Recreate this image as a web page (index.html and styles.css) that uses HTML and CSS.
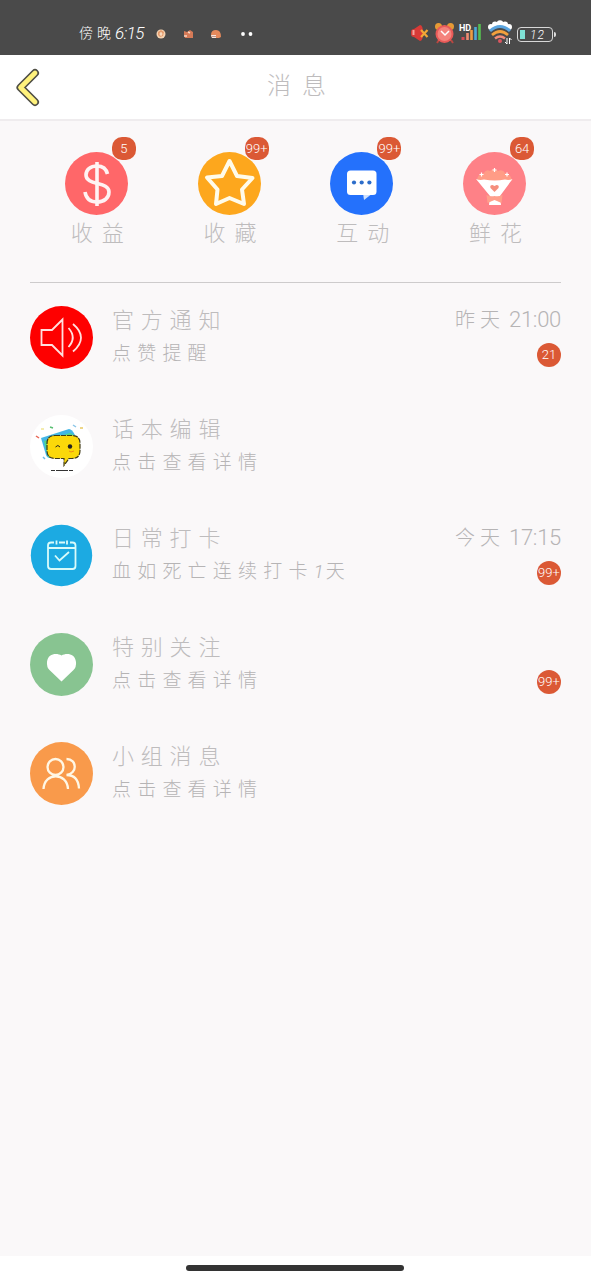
FILE: index.html
```html
<!DOCTYPE html>
<html lang="zh-CN">
<head>
<meta charset="utf-8">
<title>消息</title>
<link rel="stylesheet" href="styles.css">
</head>
<body>
<div class="status">
  <div class="status-left">
    <span class="clock"><span class="period">傍晚</span><span class="clock-digits">6:15</span></span>
    <svg class="minis" width="100" height="14" viewBox="0 0 100 14">
      <circle cx="8" cy="7" r="4.500" fill="#f4d3b2"/><path d="M5 5l3-2 3 2-1 4-3 1-2-2z" fill="#e49a6b"/><path d="M6.500 7h3M8 5v4" stroke="#fff0dc"/>
      <path d="M31 4l3 1 3-2 3 2v6h-8l-1-3z" fill="#d57a57"/><path d="M31 9h3M35 5l2 1" stroke="#f8d7c3" stroke-width="1.500"/>
      <path d="M58 8q0-5 5-5 5 0 5 7l-2 1h-7z" fill="#e58a5c"/><path d="M58 8h5v3h-4z" fill="#f9e5dc"/><path d="M60 9v1M62 9v1" stroke="#884a3a"/>
      <circle cx="90" cy="7" r="1.900" fill="#fff"/><circle cx="97.500" cy="7" r="1.900" fill="#fff"/>
    </svg>
  </div>
  <div class="status-right">
    <svg width="105" height="26" viewBox="0 0 105 26">
      <path d="M0 12q0-3 3-3l6-4q3 0 3 8t-3 8l-6-4q-3 0-3-3z" fill="#d83a37"/><path d="M2.500 10v5" stroke="#f7a19b" stroke-width="2"/><path d="M10 10l6.500 7M16.500 10L10 17" stroke="#f4a735" stroke-width="2.200"/>
      <circle cx="27.500" cy="6.500" r="3.500" fill="#e69a35"/><circle cx="39.500" cy="6.500" r="3.500" fill="#e69a35"/><path d="M28 20l-2 3M40 20l2 3" stroke="#b84740" stroke-width="2"/><circle cx="33.500" cy="14" r="9" fill="#e95a58"/><circle cx="33.500" cy="14" r="7" fill="#f4837c"/><path d="M30 11l4 4 4-4" fill="none" stroke="#fff" stroke-width="1.500"/>
      <path d="M52 17v3" stroke="#d84b54" stroke-width="3"/><path d="M56.500 13v7" stroke="#ef8c71" stroke-width="2.600"/><path d="M60.500 10v10" stroke="#ef9b42" stroke-width="2.600"/><path d="M64.500 7v13" stroke="#4ea8d8" stroke-width="2.600"/><path d="M68.500 4v16" stroke="#55bd51" stroke-width="2.600"/>
      <text class="hd" x="48" y="11">HD</text>
      <g fill="#fff"><circle cx="80" cy="7" r="3"/><circle cx="84" cy="4.500" r="3"/><circle cx="89" cy="3.500" r="3.200"/><circle cx="94" cy="4.500" r="3"/><circle cx="98" cy="7" r="3"/></g><path d="M79 11q10-9 20 0" fill="none" stroke="#5ba5df" stroke-width="3"/><path d="M81 15q8-7 16 0" fill="none" stroke="#f2a13d" stroke-width="2.700"/><path d="M84 18.500q5-4 10 0" fill="none" stroke="#f18b78" stroke-width="2.500"/><circle cx="89" cy="21" r="2" fill="#db5660"/><path d="M96 18v6l-2-2M98.500 24v-6l2 2" fill="none" stroke="#fff"/>
    </svg>
    <div class="battery"><span class="charge"></span><span class="level">12</span></div><i class="cap"></i>
  </div>
</div>
<header class="header">
  <svg class="back" width="28" height="42" viewBox="0 0 28 42"><path d="M21 6L6.500 20.500 21 35" fill="none" stroke="#504f45" stroke-width="8" stroke-linecap="round" stroke-linejoin="round"/><path d="M21 6L6.500 20.500 21 35" fill="none" stroke="#fff27c" stroke-width="4.700" stroke-linecap="round" stroke-linejoin="round"/></svg>
  <h1 class="heading">消息</h1>
</header>
<main class="content">
  <nav class="shortcuts">
    <div class="shortcut"><div class="icon-wrap">
      <svg class="icon" viewBox="0 0 63 63"><circle cx="31.500" cy="31.500" r="31.500" fill="#ff6769"/><g fill="none" stroke="#fff3f3" stroke-width="3.600"><path d="M32 10v44"/><path d="M42.500 22C41 15.500 36 14 32 14c-7 0-11 4-11 9 0 11 23 6 23 17 0 6-5 10-12 10-7 0-11-4-12-10"/></g></svg>
      <span class="badge corner">5</span></div><span class="label">收益</span></div>
    <div class="shortcut"><div class="icon-wrap">
      <svg class="icon" viewBox="0 0 63 63"><circle cx="31.500" cy="31.500" r="31.500" fill="#fda71d"/><path d="M31.500 9L39 24l15.500 2L44 37.500 46 52l-14.500-6L18 52l1.500-14.500L9 25.500l15-1.500z" fill="none" stroke="#fffbea" stroke-width="4" stroke-linejoin="round"/></svg>
      <span class="badge corner">99+</span></div><span class="label">收藏</span></div>
    <div class="shortcut"><div class="icon-wrap">
      <svg class="icon" viewBox="0 0 63 63"><circle cx="31.500" cy="31.500" r="31.500" fill="#2471fc"/><path d="M33 41l1 7 9-7" fill="#cfe0fb"/><rect x="17" y="18.500" width="29.500" height="24.500" rx="3.500" fill="#fff"/><g fill="#2c6dca"><circle cx="24" cy="30.500" r="2.100"/><circle cx="31.700" cy="30.500" r="2.100"/><circle cx="39.400" cy="30.500" r="2.100"/></g></svg>
      <span class="badge corner">99+</span></div><span class="label">互动</span></div>
    <div class="shortcut"><div class="icon-wrap">
      <svg class="icon" viewBox="0 0 63 63"><circle cx="31.500" cy="31.500" r="31.500" fill="#fe8187"/><path d="M14 29q0-7 7-8 2-4 6-2 4-4 8 0 5-2 7 2 6 1 7 8z" fill="#ff9c86"/><path d="M13 27q4 1.500 8 .5 11 2 21 0 4 1 7.500-.5L37 44l1 9H26l1-9z" fill="#fff"/><path d="M23.500 43q4 2 8 1 4 1 8-1l-1 8-7-3-7 3z" fill="#ff9f8b"/><path d="M27 53q0-4 4.500-4t4.500 4z" fill="#fff"/><path d="M31.500 40l-4-4q-1-3 2-3l2 1 2-1q3 0 2 3z" fill="#f58e7c"/><g stroke="#fff" stroke-width="1.200"><path d="M29.500 18h4M31.500 16v4M16.500 22.500h4M18.500 20.500v4M42 22.500h4M44 20.500v4"/></g></svg>
      <span class="badge corner">64</span></div><span class="label">鲜花</span></div>
  </nav>
  <section class="messages">
    <article class="row">
      <svg class="icon" viewBox="0 0 63 63"><circle cx="31.500" cy="31.500" r="31.500" fill="#fe0000"/><g fill="none" stroke="#ffe0df" stroke-width="1.800"><path d="M11.500 24H22L32.500 13.500v36L22 39H11.500z"/><path d="M38.500 22q8.500 9.500 0 19M43 18q16 13.500 0 27.500"/></g></svg>
      <div class="body"><h2 class="title">官方通知</h2><p class="sub">点赞提醒</p></div>
      <div class="meta"><time class="time"><span class="day">昨天</span>21:00</time><span class="badge round">21</span></div>
    </article>
    <article class="row">
      <svg class="icon" viewBox="0 0 63 63"><circle cx="31.500" cy="31.500" r="31.500" fill="#fff"/><path d="M11 23l28-9q3 0 6 6L20 43q-3 0-4-3z" fill="#42b6e5"/><path d="M14 26l26-8 7 4-27 21q-2-1-3-4z" fill="#4ed58a"/><path d="M25 20.500h17q8 0 8 8v7q0 8-8 8h-3l-5 7v-7h-9q-8 0-8-8v-7q0-8 8-8z" fill="#fbd80a" stroke="#3e3a18" stroke-width="1.200" stroke-dasharray="5 1"/><circle cx="40" cy="31.500" r="2.200" fill="#222"/><path d="M25.500 32q2.500-3 4.500 0" fill="none" stroke="#222"/><path d="M39 36l2 1 3-1" fill="none" stroke="#ee8a19"/><path d="M21 55.500h22" stroke="#333" stroke-dasharray="4 1 12 1"/><g fill="none" stroke-width="1.500"><path d="M6 21l3 2" stroke="#e96453"/><path d="M11 14h3" stroke="#f1e695"/><path d="M20 12l3 1" stroke="#59bf72"/><path d="M43 10l3 2" stroke="#8ac6e8"/><path d="M50 13h3" stroke="#e8c862"/><path d="M13 42l2 2" stroke="#69bce9"/></g></svg>
      <div class="body"><h2 class="title">话本编辑</h2><p class="sub">点击查看详情</p></div>
    </article>
    <article class="row">
      <svg class="icon" viewBox="0 0 63 63"><circle cx="31.500" cy="31.500" r="30.700" fill="#1caae2"/><g fill="none" stroke="#d9fbfa" stroke-width="1.800"><path d="M24 18.500h-3q-3 0-3 3V42q0 3 3 3h21.500q3 0 3-3V21.500q0-3-3-3H40M29 18.500h6M18 24h27.500"/><path d="M26.500 16.500v4M37 16.500v4M25 31.500l4.500 5 9.500-8.500"/></g></svg>
      <div class="body"><h2 class="title">日常打卡</h2><p class="sub">血如死亡连续打卡<span class="one">1</span>天</p></div>
      <div class="meta"><time class="time"><span class="day">今天</span>17:15</time><span class="badge round">99+</span></div>
    </article>
    <article class="row">
      <svg class="icon" viewBox="0 0 63 63"><circle cx="31.500" cy="31.500" r="31.500" fill="#88c491"/><path d="M31.500 48.500L19.500 37q-3-3-2.500-8c1-9 10-9 14.500-6.500C36 20 45 20 46 29q.5 5-2.500 8z" fill="#fff"/></svg>
      <div class="body"><h2 class="title">特别关注</h2><p class="sub">点击查看详情</p></div>
      <div class="meta end"><span class="badge round">99+</span></div>
    </article>
    <article class="row">
      <svg class="icon" viewBox="0 0 63 63"><circle cx="31.500" cy="31.500" r="31.500" fill="#f99a4b"/><g fill="none" stroke="#fff7e5" stroke-width="2.300"><circle cx="25.500" cy="25" r="8"/><path d="M13.500 47c1-17 23.500-17 24.500 0M36.500 17c11 0 11 15 0 16 8 0 12 5 12.500 13.500"/></g></svg>
      <div class="body"><h2 class="title">小组消息</h2><p class="sub">点击查看详情</p></div>
    </article>
  </section>
</main>
<footer class="home"><span class="home-bar"></span></footer>
</body>
</html>
```
FILE: styles.css
```css
* { box-sizing: border-box; }
body {
  margin: 0;
  height: 1280px;
  display: flex;
  flex-direction: column;
  background: #faf8f9;
  font-family: Roboto, "Noto Sans CJK SC", sans-serif;
  font-weight: 300;
  color: #bebcbd;
}
h1, h2, p { margin: 0; font-weight: 300; }
svg { display: block; flex: none; }

.status {
  height: 55px;
  flex: none;
  display: flex;
  justify-content: space-between;
  padding: 13px 35px 0 79px;
  background: #4a4a4a;
  color: #fff;
}
.status-left, .status-right { display: flex; align-items: center; height: 40px; }
.clock { display: flex; align-items: center; width: 74px; line-height: 24px; white-space: nowrap; }
.period { font-size: 14px; letter-spacing: 4px; }
.clock-digits { font-size: 17px; font-style: italic; letter-spacing: -.5px; }
.minis { margin-top: 2px; }
.status-right { gap: 1px; }
.hd { font: 700 9px Roboto, sans-serif; fill: #fff; }
.battery {
  width: 36px;
  height: 15px;
  padding: 2px;
  display: flex;
  border: 1px solid #d8d8d8;
  border-radius: 4px;
  margin-top: 2px;
}
.charge { width: 5px; background: #7fe1d5; }
.level { flex: 1; text-align: center; font-size: 12px; line-height: 10px; font-style: italic; letter-spacing: 1px; }
.cap { width: 2px; height: 5px; margin-top: 2px; background: #ddd; border-radius: 0 2px 2px 0; }

.header {
  height: 66px;
  flex: none;
  display: grid;
  grid-template-columns: 1fr auto 1fr;
  align-items: center;
  padding: 2px 11px 0 14px;
  background: #fff;
  border-bottom: 2px solid #efecee;
}
.heading { font-size: 24px; line-height: 32px; letter-spacing: 11px; margin-right: -10px; padding-bottom: 5px; }

.content { flex: 1; padding: 31px 30px 0; }
.shortcuts {
  height: 131px;
  display: grid;
  grid-template-columns: repeat(4, 1fr);
  border-bottom: 1px solid #cdcbcc;
}
.shortcut { display: flex; flex-direction: column; align-items: center; }
.icon-wrap { position: relative; width: 63px; height: 63px; }
.icon { width: 63px; height: 63px; }
.label { margin-top: 3px; font-size: 22px; line-height: 32px; letter-spacing: 9px; margin-right: -11px; }
.badge {
  width: 24px;
  height: 23px;
  display: flex;
  align-items: center;
  justify-content: center;
  border-radius: 10px;
  background: #db5935;
  color: #fff;
  font-size: 13px;
  line-height: 20px;
}
.corner { position: absolute; left: 47px; top: -15px; }
.round { height: 24px; border-radius: 12px; }

.messages { padding-top: 23px; }
.row { display: flex; height: 109px; }
.body { margin-left: 19px; padding-top: 1px; flex: 1; }
.title { font-size: 22px; line-height: 28px; letter-spacing: 6.800px; }
.sub { margin-top: 5px; font-size: 19px; line-height: 28px; letter-spacing: 6.200px; color: #b6b4b5; }
.one { font-style: italic; letter-spacing: 2px; }
.meta { display: flex; flex-direction: column; align-items: flex-end; }
.time { height: 37px; font-size: 22px; line-height: 28px; white-space: nowrap; color: #b6b4b5; letter-spacing: -.3px; }
.day { font-size: 20px; letter-spacing: 5px; margin-right: 4px; }
.end { padding-top: 37px; }

.home { flex: none; height: 24px; display: flex; padding: 9px 0 0 186px; background: #fff; }
.home-bar { width: 218px; height: 6px; border-radius: 3px; background: #333; }
```
